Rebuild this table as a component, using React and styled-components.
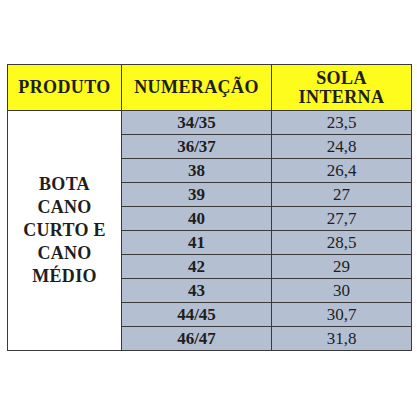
import React from 'react';
import styled, { createGlobalStyle } from 'styled-components';

const GlobalStyle = createGlobalStyle`
  html, body {
    margin: 0;
    padding: 0;
    background: #ffffff;
  }
`;

const Page = styled.div`
  width: 417px;
  height: 417px;
  box-sizing: border-box;
  padding: 64px 0 0 7px;
  background: #ffffff;
`;

const Table = styled.table`
  border-collapse: collapse;
  width: 402px;
  font-family: 'Liberation Serif', 'DejaVu Serif', serif;
  color: #1e1e1e;
  table-layout: fixed;
`;

const HeadCell = styled.th`
  background: #fdfc1c;
  border: 1px solid #3a3a3a;
  height: 45px;
  padding: 0;
  font-size: 18px;
  font-weight: bold;
  letter-spacing: 0.4px;
  line-height: 19px;
  text-align: center;
  vertical-align: middle;
  width: ${(p) => p.$w}px;
`;

const ProductCell = styled.td`
  background: #ffffff;
  border: 1px solid #3a3a3a;
  font-size: 18px;
  font-weight: bold;
  letter-spacing: 0.3px;
  line-height: 23px;
  text-align: center;
  vertical-align: middle;
  padding: 0;
`;

const Cell = styled.td`
  background: #b4bfd2;
  border: 1px solid #3a3a3a;
  height: 23px;
  padding: 0;
  font-size: 17px;
  line-height: 22px;
  font-weight: ${(p) => (p.$bold ? 'bold' : 'normal')};
  text-align: center;
  vertical-align: middle;
`;

const rows = [
  ['34/35', '23,5'],
  ['36/37', '24,8'],
  ['38', '26,4'],
  ['39', '27'],
  ['40', '27,7'],
  ['41', '28,5'],
  ['42', '29'],
  ['43', '30'],
  ['44/45', '30,7'],
  ['46/47', '31,8'],
];

export default function App() {
  return (
    <Page>
      <GlobalStyle />
      <Table>
        <thead>
          <tr>
            <HeadCell $w={113}>PRODUTO</HeadCell>
            <HeadCell $w={149}>NUMERAÇÃO</HeadCell>
            <HeadCell $w={139}>
              SOLA
              <br />
              INTERNA
            </HeadCell>
          </tr>
        </thead>
        <tbody>
          {rows.map(([num, sola], i) => (
            <tr key={num}>
              {i === 0 && (
                <ProductCell rowSpan={rows.length}>
                  BOTA
                  <br />
                  CANO
                  <br />
                  CURTO E
                  <br />
                  CANO
                  <br />
                  MÉDIO
                </ProductCell>
              )}
              <Cell $bold>{num}</Cell>
              <Cell>{sola}</Cell>
            </tr>
          ))}
        </tbody>
      </Table>
    </Page>
  );
}
